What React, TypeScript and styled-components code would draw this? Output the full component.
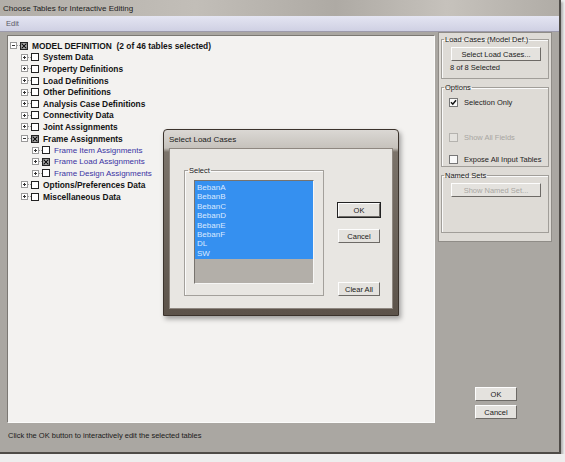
import React from "react";
import styled, { createGlobalStyle } from "styled-components";

const GlobalStyle = createGlobalStyle`
  html, body {
    margin: 0;
    padding: 0;
    background: #eeeeee;
  }
  body {
    font-family: "Liberation Sans", Arial, sans-serif;
  }
`;

interface TreeItem {
  label: string;
  level: number;
  expanded?: boolean;
  checked?: boolean;
  sub?: boolean;
}

const treeItems: TreeItem[] = [
  { label: "MODEL DEFINITION  (2 of 46 tables selected)", level: 0, expanded: true, checked: true },
  { label: "System Data", level: 1 },
  { label: "Property Definitions", level: 1 },
  { label: "Load Definitions", level: 1 },
  { label: "Other Definitions", level: 1 },
  { label: "Analysis Case Definitions", level: 1 },
  { label: "Connectivity Data", level: 1 },
  { label: "Joint Assignments", level: 1 },
  { label: "Frame Assignments", level: 1, expanded: true, checked: true },
  { label: "Frame Item Assignments", level: 2, sub: true },
  { label: "Frame Load Assignments", level: 2, sub: true, checked: true },
  { label: "Frame Design Assignments", level: 2, sub: true },
  { label: "Options/Preferences Data", level: 1 },
  { label: "Miscellaneous Data", level: 1 },
];

const loadCases = ["BebanA", "BebanB", "BebanC", "BebanD", "BebanE", "BebanF", "DL", "SW"];

function Expander({ open }: { open?: boolean }) {
  return (
    <ExpBox>
      <svg width="7" height="7" viewBox="0 0 7 7">
        <rect x="0.5" y="0.5" width="6" height="6" fill="#fff" stroke="#9a9a9a" />
        <line x1="2" y1="3.5" x2="5" y2="3.5" stroke="#333" />
        {!open && <line x1="3.5" y1="2" x2="3.5" y2="5" stroke="#333" />}
      </svg>
      <Stub />
    </ExpBox>
  );
}

function TreeCheck({ checked }: { checked?: boolean }) {
  return (
    <svg width="8" height="8" viewBox="0 0 8 8">
      <rect x="0.5" y="0.5" width="7" height="7" fill={checked ? "#444" : "#fff"} stroke="#222" />
      {checked && (
        <>
          <rect x="1.5" y="1.5" width="5" height="5" fill="#fff" />
          <path d="M2 2 L6 6 M6 2 L2 6" stroke="#111" strokeWidth="1.5" />
        </>
      )}
    </svg>
  );
}

function OptionCheck({ checked, disabled }: { checked?: boolean; disabled?: boolean }) {
  return (
    <svg width="9" height="9" viewBox="0 0 9 9">
      <rect x="0.5" y="0.5" width="8" height="8" fill={disabled ? "#e4e2de" : "#f9f9f9"} stroke={disabled ? "#b4b2ae" : "#777"} />
      {checked && <path d="M2 4.2 L3.8 6.2 L7 2.2" fill="none" stroke="#111" strokeWidth="1.5" />}
    </svg>
  );
}

export default function App() {
  return (
    <>
      <GlobalStyle />
      <Window>
        <TitleBar>Choose Tables for Interactive Editing</TitleBar>
        <MenuBar>
          <MenuItem>Edit</MenuItem>
        </MenuBar>
        <Body>
          <TreePanel>
            {treeItems.map((it) => (
              <TreeRow key={it.label} $level={it.level}>
                <Expander open={it.expanded} />
                <TreeCheck checked={it.checked} />
                <TreeLabel $sub={it.sub}>{it.label}</TreeLabel>
              </TreeRow>
            ))}
          </TreePanel>
          <SideColumn>
            <SidePanel>
              <Group $height={44}>
                <Legend>Load Cases (Model Def.)</Legend>
                <WideButton>Select Load Cases...</WideButton>
                <Note>8 of 8 Selected</Note>
              </Group>
              <Group $height={84}>
                <Legend>Options</Legend>
                <CheckRow $top={6}>
                  <OptionCheck checked />
                  <CheckLabel>Selection Only</CheckLabel>
                </CheckRow>
                <CheckRow $top={26}>
                  <OptionCheck disabled />
                  <CheckLabel $disabled>Show All Fields</CheckLabel>
                </CheckRow>
                <CheckRow $top={13}>
                  <OptionCheck />
                  <CheckLabel>Expose All Input Tables</CheckLabel>
                </CheckRow>
              </Group>
              <Group $height={62}>
                <Legend>Named Sets</Legend>
                <WideButton disabled>Show Named Set...</WideButton>
              </Group>
            </SidePanel>
            <BottomButtons>
              <Button>OK</Button>
              <Button>Cancel</Button>
            </BottomButtons>
          </SideColumn>
        </Body>
        <StatusBar>Click the OK button to interactively edit the selected tables</StatusBar>

        <Dialog>
          <DialogTitle>Select Load Cases</DialogTitle>
          <DialogBody>
            <SelectGroup>
              <Legend>Select</Legend>
              <ListBox>
                <Selection>
                  {loadCases.map((c) => (
                    <ListRow key={c}>{c}</ListRow>
                  ))}
                </Selection>
              </ListBox>
            </SelectGroup>
            <DialogButtons>
              <Button $default>OK</Button>
              <Button>Cancel</Button>
              <Spacer />
              <Button>Clear All</Button>
            </DialogButtons>
          </DialogBody>
        </Dialog>
      </Window>
    </>
  );
}

const Window = styled.div`
  position: relative;
  width: 559px;
  height: 452px;
  display: flex;
  flex-direction: column;
  background: #aaa7a2;
  border-right: 2px solid #4e4b47;
  border-bottom: 2px solid #4e4b47;
  box-shadow: 2px 2px 2px rgba(0, 0, 0, 0.25);
  overflow: hidden;
`;

const TitleBar = styled.div`
  height: 16px;
  display: flex;
  align-items: center;
  padding-left: 3px;
  font-size: 8px;
  color: #1c1c1c;
  background: linear-gradient(90deg, #b2aea8 0%, #c2beb8 35%, #aeaaa4 60%, #c6c2bc 80%, #b0aca6 100%);
`;

const MenuBar = styled.div`
  height: 16px;
  display: flex;
  align-items: center;
  padding-left: 6px;
  background: linear-gradient(#e4e5f2, #cfd0e3);
  border-bottom: 1px solid #9d9bab;
  box-sizing: border-box;
`;

const MenuItem = styled.span`
  font-size: 7.5px;
  color: #5a5a66;
`;

const Body = styled.div`
  height: 395px;
  display: flex;
  padding: 3px 0 0 7px;
  box-sizing: border-box;
`;

const TreePanel = styled.div`
  width: 428px;
  height: 388px;
  box-sizing: border-box;
  padding-top: 4px;
  background: #f3f2f0;
  border-top: 1px solid #7b7873;
  border-left: 1px solid #7b7873;
  border-right: 1px solid #fbfbfa;
  border-bottom: 1px solid #fbfbfa;
`;

const TreeRow = styled.div<{ $level: number }>`
  height: 11.6px;
  display: flex;
  align-items: center;
  padding-left: ${(p) => 2 + p.$level * 11}px;
`;

const ExpBox = styled.span`
  display: flex;
  align-items: center;
  width: 10px;
`;

const Stub = styled.span`
  width: 3px;
  border-top: 1px dotted #999;
`;

const TreeLabel = styled.span<{ $sub?: boolean }>`
  margin-left: 4px;
  font-size: ${(p) => (p.$sub ? "8px" : "8.4px")};
  font-weight: ${(p) => (p.$sub ? 400 : 700)};
  color: ${(p) => (p.$sub ? "#3a33a3" : "#141414")};
  white-space: pre;
`;

const SideColumn = styled.div`
  width: 114px;
  margin-left: 3px;
  display: flex;
  flex-direction: column;
  padding-bottom: 5px;
  box-sizing: border-box;
  height: 392px;
  margin-top: -3px;
`;

const SidePanel = styled.div`
  height: 210px;
  box-sizing: border-box;
  padding: 2px 2px 0 2px;
  background: #dedbd6;
  border: 1px solid #8f8c87;
  display: flex;
  flex-direction: column;
  gap: 4px;
`;

const Group = styled.fieldset<{ $height: number }>`
  margin: 0;
  height: ${(p) => p.$height}px;
  box-sizing: border-box;
  padding: 0 0 0 8px;
  border: 1px solid #a19e99;
  box-shadow: inset 1px 1px 0 #fafafa;
  display: flex;
  flex-direction: column;
  align-items: flex-start;
`;

const Legend = styled.legend`
  padding: 0 1px;
  margin-left: -6px;
  font-size: 7.5px;
  color: #222;
  line-height: 9px;
`;

const Button = styled.button<{ $default?: boolean }>`
  width: 42px;
  height: 14px;
  padding: 0;
  font-family: "Liberation Sans", Arial, sans-serif;
  font-size: 7.5px;
  color: ${(p) => (p.disabled ? "#a9a7a3" : "#1a1a1a")};
  background: #e4e2de;
  border: 1px solid;
  border-color: #fdfdfd #6d6a66 #6d6a66 #fdfdfd;
  outline: ${(p) => (p.$default ? "1px solid #222" : "none")};
  outline-offset: 0;
  box-sizing: border-box;
`;

const WideButton = styled(Button)`
  width: 90px;
  margin-top: 3px;
  margin-left: 1px;
`;

const Note = styled.div`
  margin-top: 2px;
  font-size: 7.5px;
  color: #222;
`;

const CheckRow = styled.div<{ $top: number }>`
  display: flex;
  align-items: center;
  gap: 6px;
  margin-top: ${(p) => p.$top}px;
  margin-left: -1px;
`;

const CheckLabel = styled.span<{ $disabled?: boolean }>`
  font-size: 7.5px;
  color: ${(p) => (p.$disabled ? "#a8a6a2" : "#1e1e1e")};
`;

const BottomButtons = styled.div`
  margin-top: auto;
  display: flex;
  flex-direction: column;
  align-items: center;
  gap: 4px;
  padding-left: 2px;
`;

const StatusBar = styled.div`
  flex: 1;
  display: flex;
  align-items: center;
  padding-left: 8px;
  padding-bottom: 8px;
  font-size: 7.5px;
  color: #1a1a1a;
`;

const Dialog = styled.div`
  position: absolute;
  left: 163px;
  top: 129px;
  width: 236px;
  height: 187px;
  box-sizing: border-box;
  display: flex;
  flex-direction: column;
  padding: 0 5px 6px 5px;
  border: 1px solid #3b332c;
  border-radius: 4px 4px 0 0;
  background: linear-gradient(#dbd8d4 0px, #c6c2bc 18px, #7b736a 22px, #5c534a 100%);
  box-shadow: 2px 3px 5px rgba(0, 0, 0, 0.35);
`;

const DialogTitle = styled.div`
  height: 18px;
  display: flex;
  align-items: center;
  font-size: 8px;
  color: #1a1a1a;
`;

const DialogBody = styled.div`
  flex: 1;
  display: flex;
  padding: 17px 0 0 14px;
  background: #e8e6e2;
  border: 1px solid #8e8780;
`;

const SelectGroup = styled.fieldset`
  margin: 0;
  width: 140px;
  height: 130px;
  box-sizing: border-box;
  padding: 5px 0 0 9px;
  border: 1px solid #a3a09b;
  box-shadow: inset 1px 1px 0 #fafafa;
`;

const ListBox = styled.div`
  width: 120px;
  height: 104px;
  margin-top: 0;
  box-sizing: border-box;
  background: #b3afa9;
  border-top: 1px solid #77736e;
  border-left: 1px solid #77736e;
  border-right: 1px solid #f6f6f5;
  border-bottom: 1px solid #f6f6f5;
`;

const Selection = styled.div`
  padding: 2px 0 1px 2px;
  background: #3590f0;
`;

const ListRow = styled.div`
  height: 9.4px;
  line-height: 9.4px;
  font-size: 8px;
  color: #dbe9ff;
`;

const DialogButtons = styled.div`
  margin-left: 14px;
  display: flex;
  flex-direction: column;
  padding-top: 37px;
  gap: 12px;
  height: 130px;
  box-sizing: border-box;
`;

const Spacer = styled.div`
  flex: 1;
`;
